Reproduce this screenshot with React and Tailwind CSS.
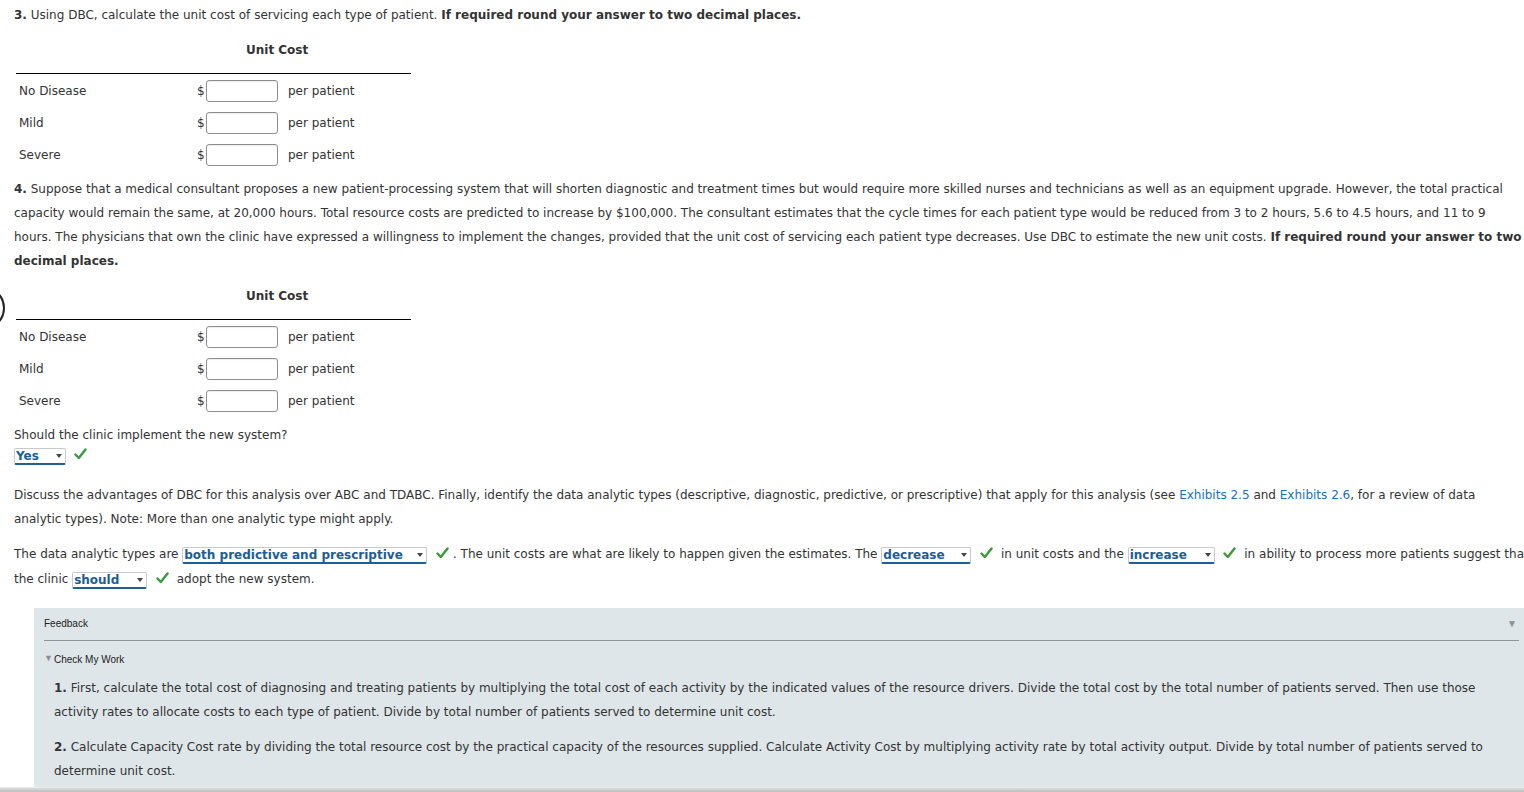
import React from 'react';

const Check = () => (
  <svg width="13" height="12" viewBox="0 0 13 12" className="inline-block align-[-1px]">
    <path d="M1.5 6.5 L4.8 10 L11.5 1.5" fill="none" stroke="#3b9a3b" strokeWidth="2.4" strokeLinecap="round" strokeLinejoin="round" />
  </svg>
);

const Select = ({ value, width }) => (
  <span className={`inline-flex items-center h-[17px] align-[-1px] border border-[#c9c9c9] border-b-2 border-b-[#1f5f96] rounded-[2px] bg-white pl-[1px] pr-[3px] font-bold text-[#1b5d98] leading-none ${width}`}>
    <span>{value}</span>
    <span className="ml-auto w-0 h-0 border-l-[3px] border-r-[3px] border-t-[4px] border-l-transparent border-r-transparent border-t-[#444]" />
  </span>
);

const UnitCostTable = () => {
  const rows = ['No Disease', 'Mild', 'Severe'];
  return (
    <div className="ml-[2px] w-[395px]">
      <div className="h-[47px] flex items-center pl-[230px] font-bold border-b border-black">Unit Cost</div>
      <div className="pt-[1px]">
        {rows.map((r) => (
          <div key={r} className="h-[32px] flex items-center">
            <div className="w-[181px] pl-[3px]">{r}</div>
            <span className="w-[9px]">$</span>
            <span className="inline-block w-[72px] h-[22px] border border-[#8e8e8e] rounded-[3px] bg-white shadow-[inset_0_1px_1px_rgba(0,0,0,0.08)]" />
            <span className="ml-[10px]">per patient</span>
          </div>
        ))}
      </div>
    </div>
  );
};

export default function App() {
  return (
    <div className="relative min-h-screen overflow-hidden bg-white font-['DejaVu_Sans','Verdana',sans-serif] text-[12px] text-[#333]">
      {/* partial circle on the left edge */}
      <div className="absolute left-[-39px] top-[286px] w-[44px] h-[44px] rounded-full border-2 border-[#222]" />

      <div className="ml-[14px] w-[1526px]">
        <p className="pt-[3px] leading-[24px]">
          <b>3.</b> Using DBC, calculate the unit cost of servicing each type of patient. <b>If required round your answer to two decimal places.</b>
        </p>

        <UnitCostTable />

        <p className="mt-[6px] leading-[24px]">
          <b>4.</b> Suppose that a medical consultant proposes a new patient-processing system that will shorten diagnostic and treatment times but would require more skilled nurses and technicians as well as an equipment upgrade. However, the total practical capacity would remain the same, at 20,000 hours. Total resource costs are predicted to increase by $100,000. The consultant estimates that the cycle times for each patient type would be reduced from 3 to 2 hours, 5.6 to 4.5 hours, and 11 to 9<br />hours. The physicians that own the clinic have expressed a willingness to implement the changes, provided that the unit cost of servicing each patient type decreases. Use DBC to estimate the new unit costs. <b>If required round your answer to two decimal places.</b>
        </p>

        <UnitCostTable />

        <p className="mt-[6px] leading-[24px]">Should the clinic implement the new system?</p>
        <div className="-mt-[4px] leading-[24px]">
          <Select value="Yes" width="w-[52px]" />
          <span className="ml-[8px]"><Check /></span>
        </div>

        <p className="mt-[16px] leading-[24px]">
          Discuss the advantages of DBC for this analysis over ABC and TDABC. Finally, identify the data analytic types (descriptive, diagnostic, predictive, or prescriptive) that apply for this analysis (see <span className="text-[#1570c7]">Exhibits 2.5</span> and <span className="text-[#1570c7]">Exhibits 2.6</span>, for a review of data<br />analytic types). Note: More than one analytic type might apply.
        </p>

        <p className="mt-[11px] leading-[25px]">
          The data analytic types are <Select value="both predictive and prescriptive" width="w-[245px]" /> <span className="ml-[5px]"><Check /></span> . The unit costs are what are likely to happen given the estimates. The <Select value="decrease" width="w-[90px]" /> <span className="ml-[5px] mr-[4px]"><Check /></span> in unit costs and the <Select value="increase" width="w-[87px]" /> <span className="ml-[5px] mr-[4px]"><Check /></span> in ability to process more patients suggest that the clinic <Select value="should" width="w-[75px]" /> <span className="ml-[5px] mr-[4px]"><Check /></span> adopt the new system.
        </p>

        <div className="mt-[16px] ml-[20px] mr-[11px] bg-[#dfe6e9] px-[10px] pb-[12px]">
          <div className="pt-[7px] flex items-center h-[23px] font-['Liberation_Sans',Arial,sans-serif] text-[10px] text-[#222]">
            <span>Feedback</span>
            <span className="ml-auto mr-[2px] text-[10px] text-[#8a8f92]">▼</span>
          </div>
          <div className="mt-[9px] border-t border-[#8f9699]" />
          <div className="mt-[10px] h-[16px] flex items-center font-['Liberation_Sans',Arial,sans-serif] text-[10px] text-[#222]">
            <span className="text-[9px] text-[#8a8f92] mr-[1px]">▼</span>Check My Work
          </div>
          <div className="pl-[10px]">
            <p className="mt-[9px] leading-[24px]">
              <b>1.</b> First, calculate the total cost of diagnosing and treating patients by multiplying the total cost of each activity by the indicated values of the resource drivers. Divide the total cost by the total number of patients served. Then use those activity rates to allocate costs to each type of patient. Divide by total number of patients served to determine unit cost.
            </p>
            <p className="mt-[11px] leading-[24px]">
              <b>2.</b> Calculate Capacity Cost rate by dividing the total resource cost by the practical capacity of the resources supplied. Calculate Activity Cost by multiplying activity rate by total activity output. Divide by total number of patients served to determine unit cost.
            </p>
          </div>
        </div>
      </div>

      {/* horizontal scrollbar strip */}
      <div className="fixed left-0 right-0 bottom-0 h-[5px] border-t border-[#ececec] bg-gradient-to-b from-[#dcdcdc] to-[#bdbdbd]" />
    </div>
  );
}
